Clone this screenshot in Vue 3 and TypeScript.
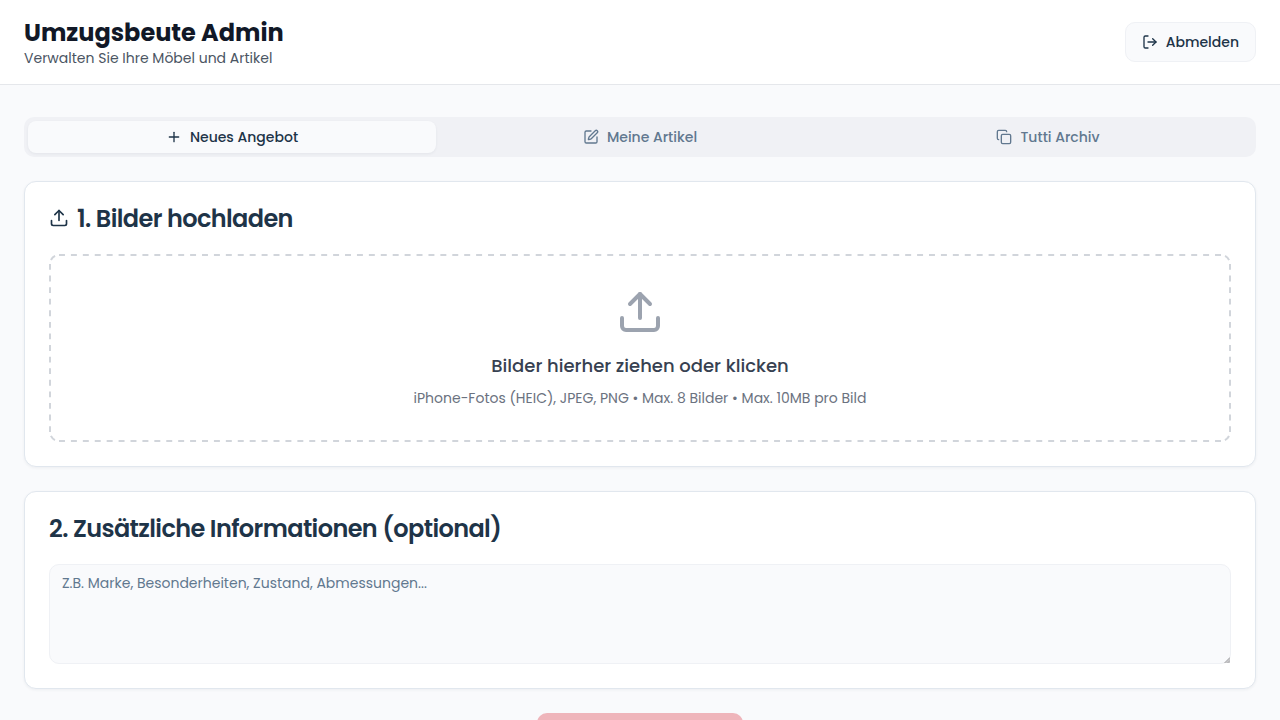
<script setup lang="ts">
import { ref } from 'vue'

type TabId = 'new' | 'items' | 'archive'

interface Tab {
  id: TabId
  label: string
}

const tabs: Tab[] = [
  { id: 'new', label: 'Neues Angebot' },
  { id: 'items', label: 'Meine Artikel' },
  { id: 'archive', label: 'Tutti Archiv' },
]

const activeTab = ref<TabId>('new')
const details = ref('')
</script>

<template>
  <div class="page">
    <header class="header">
      <div>
        <h1 class="title">Umzugsbeute Admin</h1>
        <p class="subtitle">Verwalten Sie Ihre Möbel und Artikel</p>
      </div>
      <button class="logout" type="button">
        <svg class="icon" viewBox="0 0 24 24">
          <path d="M9 21H5a2 2 0 0 1-2-2V5a2 2 0 0 1 2-2h4" />
          <path d="m16 17 5-5-5-5" />
          <path d="M21 12H9" />
        </svg>
        Abmelden
      </button>
    </header>

    <main class="content">
      <nav class="tabs">
        <button
          v-for="tab in tabs"
          :key="tab.id"
          type="button"
          class="tab"
          :class="{ active: tab.id === activeTab }"
          @click="activeTab = tab.id"
        >
          <svg class="icon" viewBox="0 0 24 24">
            <template v-if="tab.id === 'new'">
              <path d="M5 12h14" />
              <path d="M12 5v14" />
            </template>
            <template v-else-if="tab.id === 'items'">
              <path d="M12 3H5a2 2 0 0 0-2 2v14a2 2 0 0 0 2 2h14a2 2 0 0 0 2-2v-7" />
              <path
                d="M18.375 2.625a1 1 0 0 1 3 3l-9.013 9.014a2 2 0 0 1-.853.505l-2.873.84a.5.5 0 0 1-.62-.62l.84-2.873a2 2 0 0 1 .506-.852z"
              />
            </template>
            <template v-else>
              <rect x="8" y="8" width="14" height="14" rx="2" ry="2" />
              <path d="M4 16c-1.1 0-2-.9-2-2V4c0-1.1.9-2 2-2h10c1.1 0 2 .9 2 2" />
            </template>
          </svg>
          {{ tab.label }}
        </button>
      </nav>

      <section class="card">
        <h2 class="card-title">
          <svg class="icon heading-icon" viewBox="0 0 24 24">
            <path d="M21 15v4a2 2 0 0 1-2 2H5a2 2 0 0 1-2-2v-4" />
            <path d="m17 8-5-5-5 5" />
            <path d="M12 3v12" />
          </svg>
          <span class="card-title-text">1. Bilder hochladen</span>
        </h2>
        <div class="dropzone">
          <svg class="outline" viewBox="0 0 1182 188">
            <path class="side" d="M10 1H1172M10 187H1172" />
            <path class="edge" d="M1 10V178M1181 10V178" />
            <path
              class="corner"
              d="M1 10A9 9 0 0 1 10 1M1172 1A9 9 0 0 1 1181 10M1181 178A9 9 0 0 1 1172 187M10 187A9 9 0 0 1 1 178"
            />
          </svg>
          <svg class="icon drop-icon" viewBox="0 0 24 24">
            <path d="M21 15v4a2 2 0 0 1-2 2H5a2 2 0 0 1-2-2v-4" />
            <path d="m17 8-5-5-5 5" />
            <path d="M12 3v12" />
          </svg>
          <p class="drop-title">Bilder hierher ziehen oder klicken</p>
          <p class="drop-hint">iPhone-Fotos (HEIC), JPEG, PNG • Max. 8 Bilder • Max. 10MB pro Bild</p>
        </div>
      </section>

      <section class="card">
        <h2 class="card-title">
          <span class="card-title-text">2. Zusätzliche Informationen (optional)</span>
        </h2>
        <div class="field">
          <textarea
            v-model="details"
            class="details"
            placeholder="Z.B. Marke, Besonderheiten, Zustand, Abmessungen..."
          ></textarea>
          <svg class="grip" viewBox="0 0 6 6">
            <path class="grip-fill" d="M6 0V6H0Z" />
            <path class="grip-line" d="M0.5 6L6 0.5M3.5 6L6 3.5" />
          </svg>
        </div>
      </section>

      <button class="submit" type="button" disabled></button>
    </main>
  </div>
</template>

<style>
body {
  margin: 0;
  overflow: hidden;
}
</style>

<style scoped>
.page {
  height: 100vh;
  overflow: hidden;
  background: #f9fafc;
  color: #1e3448;
  font-family: Poppins, Inter, "Liberation Sans", sans-serif;
  font-size: 14px;
  line-height: 20px;
}

.page * {
  box-sizing: border-box;
}

h1,
h2,
p {
  margin: 0;
}

button,
textarea {
  font: inherit;
}

.icon {
  width: 16px;
  height: 16px;
  flex-shrink: 0;
  fill: none;
  stroke: currentColor;
  stroke-width: 2;
  stroke-linecap: round;
  stroke-linejoin: round;
}

.header {
  display: flex;
  align-items: center;
  justify-content: space-between;
  height: 85px;
  padding: 0 24px;
  background: #fff;
  border-bottom: 1px solid #e5e7eb;
}

.title {
  margin-bottom: -1px;
  padding-top: 1px;
  font-size: 24px;
  line-height: 32px;
  font-weight: 700;
  color: #111827;
}

.subtitle {
  color: #4b5563;
}

.logout {
  display: flex;
  align-items: center;
  gap: 8px;
  height: 40px;
  padding: 0 16px;
  border: 1px solid #eff1f5;
  border-radius: 10px;
  background: #f9fafc;
  color: #1e3448;
  font-weight: 500;
}

.content {
  display: flex;
  flex-direction: column;
  gap: 24px;
  padding: 32px 24px;
}

.tabs {
  display: grid;
  grid-template-columns: repeat(3, 1fr);
  height: 40px;
  padding: 4px;
  border-radius: 10px;
  background: #f0f1f5;
}

.tab {
  display: flex;
  align-items: center;
  justify-content: center;
  gap: 8px;
  padding: 0;
  border: 0;
  border-radius: 8px;
  background: transparent;
  color: #61788f;
  font-weight: 500;
}

.tab.active {
  background: #f9fafc;
  color: #1e3448;
  box-shadow: 0 1px 3px rgba(30, 52, 72, 0.06);
}

.card {
  padding: 24px;
  border: 1px solid #e1e7ee;
  border-radius: 12px;
  background: #fff;
  box-shadow: 0 1px 3px rgba(30, 52, 72, 0.06);
}

.card-title {
  display: flex;
  align-items: center;
  gap: 8px;
  margin-bottom: 24px;
  font-size: 24px;
  line-height: 24px;
  font-weight: 600;
  letter-spacing: -0.6px;
}

.card-title-text {
  margin-bottom: -1px;
  padding-top: 1px;
}

.heading-icon {
  width: 20px;
  height: 20px;
}

.dropzone {
  position: relative;
  display: flex;
  flex-direction: column;
  align-items: center;
  padding: 34px;
}

.outline {
  position: absolute;
  inset: 0;
  width: 100%;
  height: 100%;
  fill: none;
  stroke: #d1d5db;
  stroke-width: 2;
}

.side {
  stroke-dasharray: 5.959;
}

.edge {
  stroke-dasharray: 5.793;
}

.corner {
  stroke-dasharray: 0 4.2 5.8 10;
}

.drop-icon {
  width: 48px;
  height: 48px;
  margin-bottom: 16px;
  color: #9ca3af;
}

.drop-title {
  margin-bottom: 8px;
  font-size: 18px;
  line-height: 28px;
  font-weight: 500;
  color: #374151;
}

.drop-hint {
  color: #6b7280;
}

.field {
  position: relative;
}

.details {
  display: block;
  width: 100%;
  height: 100px;
  padding: 8px 12px;
  border: 1px solid #eff1f5;
  border-radius: 10px;
  background: #f9fafc;
  color: #1e3448;
  resize: none;
}

.details::placeholder {
  color: #61788f;
  opacity: 1;
}

.grip {
  position: absolute;
  right: 1px;
  bottom: 1px;
  width: 6px;
  height: 6px;
}

.grip-fill {
  fill: #c9c9cb;
}

.grip-line {
  fill: none;
  stroke: #a6a6a8;
  stroke-width: 0.8;
}

.submit {
  align-self: center;
  width: 206px;
  height: 44px;
  border: 0;
  border-radius: 10px;
  background: #efb5bb;
}
</style>
